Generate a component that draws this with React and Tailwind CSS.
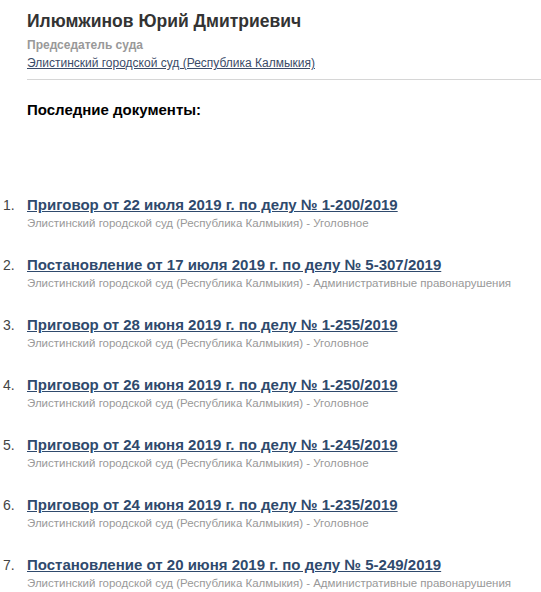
const docs = [
  { title: "Приговор от 22 июля 2019 г. по делу № 1-200/2019", kind: "Уголовное" },
  { title: "Постановление от 17 июля 2019 г. по делу № 5-307/2019", kind: "Административные правонарушения" },
  { title: "Приговор от 28 июня 2019 г. по делу № 1-255/2019", kind: "Уголовное" },
  { title: "Приговор от 26 июня 2019 г. по делу № 1-250/2019", kind: "Уголовное" },
  { title: "Приговор от 24 июня 2019 г. по делу № 1-245/2019", kind: "Уголовное" },
  { title: "Приговор от 24 июня 2019 г. по делу № 1-235/2019", kind: "Уголовное" },
  { title: "Постановление от 20 июня 2019 г. по делу № 5-249/2019", kind: "Административные правонарушения" },
];

export default function App() {
  return (
    <div className="h-[592px] overflow-hidden bg-white font-['Liberation_Sans',Arial,sans-serif] text-[#333]">
      <section className="pl-[27px] pt-[9px]">
        <h1 className="text-[17.5px] font-bold leading-[24px] text-[#333]">Илюмжинов Юрий Дмитриевич</h1>
        <p className="mt-[5px] text-[12px] font-bold leading-[14px] text-[#999]">Председатель суда</p>
        <a href="#" className="mt-[4px] block text-[12px] leading-[14px] text-[#3b4b68] underline">
          Элистинский городской суд (Республика Калмыкия)
        </a>
        <div className="mt-[9px] border-t border-[#d6d6d6]" />
        <h2 className="mt-[22px] text-[15px] font-bold leading-[16px] text-black">Последние документы:</h2>
      </section>

      <ol className="mt-[78px] flex flex-col gap-[26px]">
        {docs.map((d, i) => (
          <li key={i} className="flex items-start">
            <span className="w-[27px] pl-[3px] text-[14px] leading-[18px] text-[#444]">{i + 1}.</span>
            <div>
              <a href="#" className="block text-[15px] font-bold leading-[18px] text-[#2f4a6d] underline">
                {d.title}
              </a>
              <p className="mt-[2px] text-[11.5px] leading-[14px] text-[#999]">
                Элистинский городской суд (Республика Калмыкия) - {d.kind}
              </p>
            </div>
          </li>
        ))}
      </ol>
    </div>
  );
}
